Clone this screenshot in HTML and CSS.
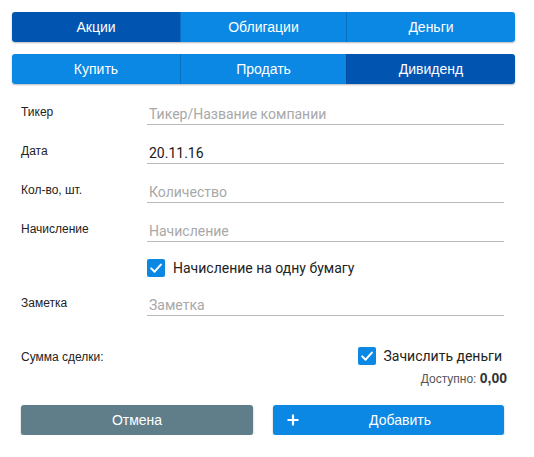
FILE: index.html
```html
<!DOCTYPE html>
<html lang="ru">
<head>
<meta charset="utf-8">
<title>Дивиденд</title>
<link rel="stylesheet" href="styles.css">
</head>
<body>
<div class="page">
  <div class="tabs">
    <div class="tab active">Акции</div>
    <div class="tab">Облигации</div>
    <div class="tab">Деньги</div>
  </div>
  <div class="tabs">
    <div class="tab">Купить</div>
    <div class="tab">Продать</div>
    <div class="tab active">Дивиденд</div>
  </div>

  <form class="form">
    <div class="row">
      <label class="label">Тикер</label>
      <input class="field" type="text" placeholder="Тикер/Название компании">
    </div>
    <div class="row">
      <label class="label">Дата</label>
      <input class="field" type="text" value="20.11.16">
    </div>
    <div class="row">
      <label class="label">Кол-во, шт.</label>
      <input class="field" type="text" placeholder="Количество">
    </div>
    <div class="row">
      <label class="label">Начисление</label>
      <input class="field" type="text" placeholder="Начисление">
    </div>
    <div class="row check-row">
      <span></span>
      <div class="check">
        <span class="box"><svg viewBox="0 0 18 18" width="18" height="18"><path d="M4.2 9.4 L7.6 12.7 L13.9 5.6" fill="none" stroke="#fff" stroke-width="2" stroke-linecap="round" stroke-linejoin="round"/></svg></span>
        <span class="check-text">Начисление на одну бумагу</span>
      </div>
    </div>
    <div class="row">
      <label class="label">Заметка</label>
      <input class="field" type="text" placeholder="Заметка">
    </div>
  </form>

  <div class="summary">
    <div class="sum-row">
      <span class="sum-label">Сумма сделки:</span>
      <div class="check">
        <span class="box"><svg viewBox="0 0 18 18" width="18" height="18"><path d="M4.2 9.4 L7.6 12.7 L13.9 5.6" fill="none" stroke="#fff" stroke-width="2" stroke-linecap="round" stroke-linejoin="round"/></svg></span>
        <span class="check-text">Зачислить деньги</span>
      </div>
    </div>
    <div class="avail">Доступно: <b>0,00</b></div>
  </div>

  <div class="actions">
    <button class="btn cancel" type="button">Отмена</button>
    <button class="btn add" type="button">
      <svg class="plus" viewBox="0 0 12 12" width="12" height="12"><path d="M6 0.5 V11.5 M0.5 6 H11.5" stroke="#fff" stroke-width="2.2"/></svg>
      <span class="btn-text">Добавить</span>
    </button>
  </div>
</div>
</body>
</html>
```

FILE: styles.css
```css
html, body {
  margin: 0;
  padding: 0;
  background: #ffffff;
}

.page {
  width: 503px;
  padding: 12px 0 0 12px;
  font-family: "Liberation Sans", Arial, sans-serif;
  color: #222;
}

.tabs {
  display: grid;
  grid-template-columns: 168px 166px 169px;
  height: 30px;
  border-radius: 3px;
  overflow: hidden;
  box-shadow: 0 1px 2px rgba(0, 0, 0, 0.28);
  margin-bottom: 12px;
}

.tab {
  display: flex;
  align-items: center;
  justify-content: center;
  background: #0a88e4;
  color: #fff;
  font-size: 14px;
}

.tab + .tab {
  border-left: 1px solid rgba(0, 40, 90, 0.25);
}

.tab.active {
  background: #0254b1;
}

.form {
  display: flex;
  flex-direction: column;
  gap: 10px;
  padding: 0 11px 0 9px;
  margin: 0;
}

.row {
  display: grid;
  grid-template-columns: 126px 1fr;
  align-items: start;
}

.label {
  font-size: 12px;
  line-height: 16px;
  padding-top: 8px;
  color: #222;
}

.field {
  box-sizing: border-box;
  width: 100%;
  height: 29px;
  margin: 0;
  padding: 10px 0 2px 2px;
  border: none;
  border-bottom: 1px solid #bbbbbb;
  outline: none;
  background: transparent;
  font-family: Roboto, "Liberation Sans", sans-serif;
  font-size: 14px;
  line-height: 16px;
  color: #1a1a1a;
}

.field::placeholder {
  color: #a8a8a8;
}

.check-row {
  padding-top: 7px;
}

.check {
  display: flex;
  align-items: center;
  gap: 8px;
}

.box {
  width: 18px;
  height: 18px;
  border-radius: 2px;
  background: #0a88e4;
  display: block;
}

.box svg {
  display: block;
}

.check-text {
  font-family: Roboto, "Liberation Sans", sans-serif;
  font-size: 14px;
  color: #222;
}

.summary {
  padding: 31px 11px 0 9px;
}

.sum-row {
  display: flex;
  align-items: center;
  justify-content: space-between;
  height: 18px;
}

.sum-row .check {
  margin-right: 2px;
}

.sum-label {
  font-size: 12px;
  color: #222;
  padding-top: 2px;
}

.avail {
  margin-top: 5px;
  margin-right: -3px;
  text-align: right;
  font-size: 12px;
  line-height: 17px;
  color: #555;
}

.avail b {
  font-size: 14px;
  color: #333;
}

.actions {
  display: grid;
  grid-template-columns: 232px 231px;
  gap: 20px;
  padding: 17px 0 0 9px;
}

.btn {
  height: 30px;
  border: none;
  border-radius: 3px;
  color: #fff;
  font-family: "Liberation Sans", Arial, sans-serif;
  font-size: 14px;
  box-shadow: 0 1px 2px rgba(0, 0, 0, 0.3);
  padding: 0;
}

.cancel {
  background: #607d8a;
}

.add {
  background: #0a88e4;
  display: flex;
  align-items: center;
  padding: 0 3px 0 14px;
}

.plus {
  display: block;
  flex: none;
}

.btn-text {
  flex: 1;
  text-align: center;
}
```
